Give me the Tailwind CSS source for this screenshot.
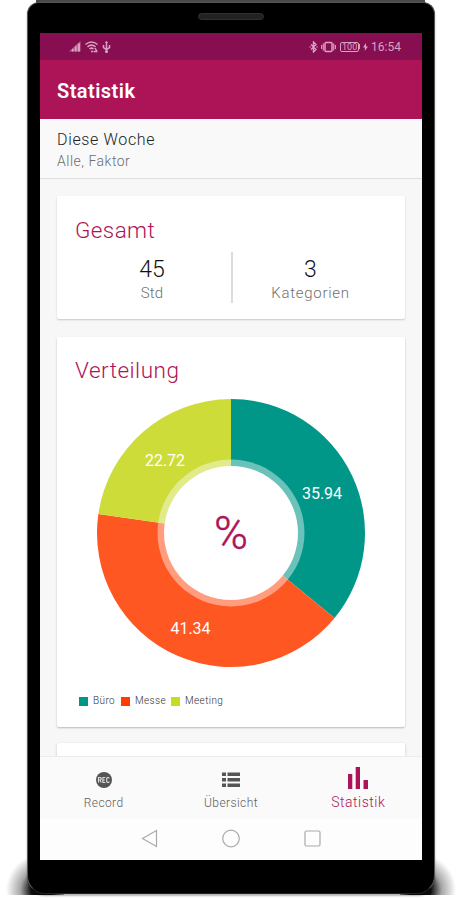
<!DOCTYPE html>
<html lang="de">
<head>
<meta charset="utf-8">
<title>Statistik</title>
<script src="https://cdn.jsdelivr.net/npm/@tailwindcss/browser@4"></script>
</head>
<body class="w-[461px] h-[900px] overflow-hidden bg-white font-['Roboto',sans-serif]">
<div class="relative w-[461px] h-[900px] overflow-hidden">
  <!-- device shadow and top edge -->
  <div class="absolute left-[4px] top-[854px] w-[60px] h-[41px] bg-[radial-gradient(ellipse_36px_36px_at_38px_36px,rgba(0,0,0,0.95)_30%,rgba(0,0,0,0.35)_60%,rgba(0,0,0,0)_100%)]"></div>
  <div class="absolute left-[400px] top-[854px] w-[60px] h-[41px] bg-[radial-gradient(ellipse_36px_36px_at_20px_36px,rgba(0,0,0,0.95)_30%,rgba(0,0,0,0.35)_60%,rgba(0,0,0,0)_100%)]"></div>
  <div class="absolute left-[36px] top-0 w-[389px] h-[20px] bg-[#4a4a4a]"></div>
  <div class="absolute left-[27px] top-[2px] w-[408px] h-[892px] bg-black border border-[#555] border-b-[#222] rounded-t-[12px] rounded-b-[18px] px-[12px] shadow-[0_2px_2px_rgba(0,0,0,0.3)]">
    <div class="h-[30px] flex justify-center pt-[10px]"><div class="w-[66px] h-[7px] rounded-full bg-[#222] border border-[#303030]"></div></div>
    <main class="w-[382px] h-[827px] bg-[#f7f7f7] flex flex-col overflow-hidden">
      <!-- status bar -->
      <div class="h-[27px] shrink-0 bg-[#870e50] flex justify-between items-center pl-[29px] pr-[21px] text-[#d9a3c0]">
        <div class="flex items-center gap-[4px]">
          <svg width="12" height="11" viewBox="0 0 12 11" fill="currentColor"><path d="M0 10.500L11.500 0v10.500z" opacity=".6"/><path d="M3 8h1.500v2.500H3zM6 5.500h1.500v5H6zM9 2.500h2v8H9z"/></svg>
          <svg width="13" height="12" viewBox="0 0 13 12" fill="none" stroke="currentColor" stroke-width="1.500"><path d="M.5 3.500Q6.500-1.500 12.500 3.500M2.500 5.800Q6.500 2.500 10.500 5.800M4.500 8Q6.500 6.300 8.500 8"/><path d="M6 10.500h2M10 7l2 3.500M8.500 10.500h4" stroke-width="1.500"/></svg>
          <svg width="9" height="12" viewBox="0 0 9 12" fill="none" stroke="currentColor" stroke-width="1.500"><path d="M4.500 1v10M1.500 4v2.500l3 2 3-2V4M3.500 2l1-1 1 1"/><circle cx="4.500" cy="10.500" r=".8"/></svg>
        </div>
        <div class="flex items-center">
          <svg width="9" height="12" viewBox="0 0 9 12" fill="none" stroke="currentColor" stroke-width="1.400"><path d="M2 3.500l5 5-2.500 2.500V1L7 3.500l-5 5M.5 6h1M7.500 6h1"/></svg>
          <svg class="ml-[3px]" width="15" height="12" viewBox="0 0 15 12" fill="none" stroke="currentColor" stroke-width="1.500"><rect x="4" y="1.500" width="7" height="9" rx="1"/><path d="M2.300 2.500v7M12.700 2.500v7M.6 4v4M14.400 4v4" stroke-width="1.100"/></svg>
          <div class="ml-[4px] w-[19px] h-[10px] border border-current rounded-[2px] text-[9px] leading-[8.500px] text-center">100</div><div class="w-px h-[5px] bg-current"></div>
          <svg class="ml-[3px]" width="5" height="8" viewBox="0 0 5 8" fill="currentColor"><path d="M3 0L0 4.500h2L1.700 8 5 3.500H3z"/></svg>
          <span class="ml-[3px] text-[12px] leading-[13px] pt-px">16:54</span>
        </div>
      </div>
      <!-- app bar -->
      <header class="h-[59px] shrink-0 bg-[#ad1457] pl-[17px] flex items-center text-white text-[20px] font-semibold pt-[2px]"><span class="tracking-[0.45px]">Statistik</span></header>
      <div class="h-[60px] shrink-0 bg-[#f9f9f9] border-b border-[#dedede] pl-[17px] pt-[11px]">
        <p class="text-[16px] leading-[20px] tracking-[0.65px] text-[#222] font-[350]"><span>Diese Woche</span></p>
        <p class="mt-[1px] text-[14px] leading-[20px] tracking-[0.5px] text-[#6d6d6d] font-[350]"><span>Alle, Faktor</span></p>
      </div>
      <div class="h-[578px] shrink-0 overflow-hidden px-[17px] pt-[17px] flex flex-col gap-[18px] border-b border-[#ececec]">
        <section class="h-[123px] shrink-0 bg-white rounded-[2px] shadow-[0_1px_2px_rgba(0,0,0,0.2)] pt-[20px]">
          <h2 class="pl-[18px] text-[22.500px] leading-[28px] tracking-[0.4px] text-[#ad1457] font-[350]"><span>Gesamt</span></h2>
          <div class="mt-[8px] h-[51px] flex pl-[16px] pr-[17px]">
            <div class="w-[158px] text-center pt-[5px]"><p class="text-[23px] leading-[25px] text-[#111] font-[350]">45</p><p class="text-[15px] leading-[22px] tracking-[0.2px] text-[#707070] font-[350]">Std</p></div>
            <div class="w-[2px] bg-[#dcdcdc]"></div>
            <div class="flex-1 text-center pt-[5px]"><p class="text-[23px] leading-[25px] text-[#111] font-[350]">3</p><p class="text-[15px] leading-[22px] tracking-[0.7px] text-[#707070] font-[350]">Kategorien</p></div>
          </div>
        </section>
        <section class="h-[390px] shrink-0 bg-white rounded-[2px] shadow-[0_1px_2px_rgba(0,0,0,0.25)] pt-[19px]">
          <h2 class="pl-[18px] text-[22.500px] leading-[28px] tracking-[0.5px] text-[#ad1457] font-[350]"><span>Verteilung</span></h2>
          <svg class="ml-[39px] mt-[14px]" width="270" height="270" viewBox="-135 -135 270 270">
            <path fill="#009688" d="M0 0V-134A134 134 0 0 1 103.580 85.010Z"/>
            <path fill="#ff5722" d="M0 0L103.580 85.010A134 134 0 0 1 -132.630 -19.110Z"/>
            <path fill="#cddc39" d="M0 0L-132.630 -19.110A134 134 0 0 1 0 -134Z"/>
            <circle r="73.500" fill="#fff" fill-opacity=".42"/>
            <circle r="67" fill="#fff"/>
            <g fill="#fff" font-size="16" font-weight="400" text-anchor="middle">
              <text x="91" y="-34">35.94</text>
              <text x="-40.500" y="101">41.34</text>
              <text x="-66" y="-67">22.72</text>
            </g>
            <text x="0" y="16" fill="#ad1457" stroke="#ad1457" stroke-width=".5" font-size="46" font-weight="350" text-anchor="middle">%</text>
          </svg>
          <div class="mt-[27px] h-[12px] flex items-center pl-[22px] text-[10px] leading-[12px] tracking-[0.4px] text-[#333] font-[350]">
            <i class="size-[9px] bg-[#009688]"></i><span class="ml-[5px] w-[28px]">Büro</span>
            <i class="size-[9px] bg-[#ff3d00]"></i><span class="ml-[5px] w-[36px]">Messe</span>
            <i class="size-[9px] bg-[#c6dc20]"></i><span class="ml-[5px]">Meeting</span>
          </div>
        </section>
        <section class="h-[40px] shrink-0 bg-white rounded-[2px] shadow-[0_1px_3px_rgba(0,0,0,0.2)] -mt-[2px]"></section>
      </div>
      <!-- bottom tabs -->
      <nav class="h-[62px] shrink-0 bg-[#fafafa] grid grid-cols-3 text-[12px] text-[#606060] font-[350]">
        <div class="flex flex-col items-center pt-[14px]">
          <svg width="18" height="18" viewBox="0 0 18 18"><circle cx="9" cy="9" r="8" fill="#555"/><path d="M3.500 11.500v-5h2l.7.800v1L5.500 9h-2m1.700 0l1 2.500M10.300 6.500H7.900v5h2.400M7.900 9h2M14.300 7.500l-.8-1h-1l-.8.800v3.400l.8.800h1l.8-1" fill="none" stroke="#ddd" stroke-width="1.100"/></svg>
          <span class="mt-[7px] leading-[14px] tracking-[0.4px]">Record</span>
        </div>
        <div class="flex flex-col items-center pt-[14px]">
          <svg width="20" height="18" viewBox="0 0 20 18" fill="#555"><path d="M1 1.500h4V5H1zM6.500 1.500H19V5H6.500zM1 7h4v3.500H1zM6.500 7H19v3.500H6.500zM1 12.500h4V16H1zM6.500 12.500H19V16H6.500z"/></svg>
          <span class="mt-[7px] leading-[14px] tracking-[0.4px]">Übersicht</span>
        </div>
        <div class="flex flex-col items-center pt-[10px] text-[#ad1457] text-[14px]">
          <svg width="20" height="22" viewBox="0 0 20 22" fill="currentColor"><path d="M0 7h4.300v15H0zM7.700 0H12v22H7.700zM15.500 13H20v9h-4.500z"/></svg>
          <span class="mt-[5px] leading-[16px] tracking-[0.5px]">Statistik</span>
        </div>
      </nav>
      <!-- system navigation -->
      <div class="grow bg-[#fdfdfd] flex pl-[101px] pt-[10px] gap-[64px]">
        <svg width="17" height="19" viewBox="0 0 17 19" fill="none" stroke="#aaa" stroke-width="1.200"><path d="M15.500 1.500v16L1.500 9.500z"/></svg>
        <svg width="18" height="19" viewBox="0 0 18 19" fill="none" stroke="#aaa" stroke-width="1.200"><circle cx="9" cy="9.500" r="8.300"/></svg>
        <svg width="17" height="19" viewBox="0 0 17 19" fill="none" stroke="#aaa" stroke-width="1.200"><rect x="1" y="2" width="15" height="15" rx="1.500"/></svg>
      </div>
    </main>
  </div>
</div>
</body>
</html>
